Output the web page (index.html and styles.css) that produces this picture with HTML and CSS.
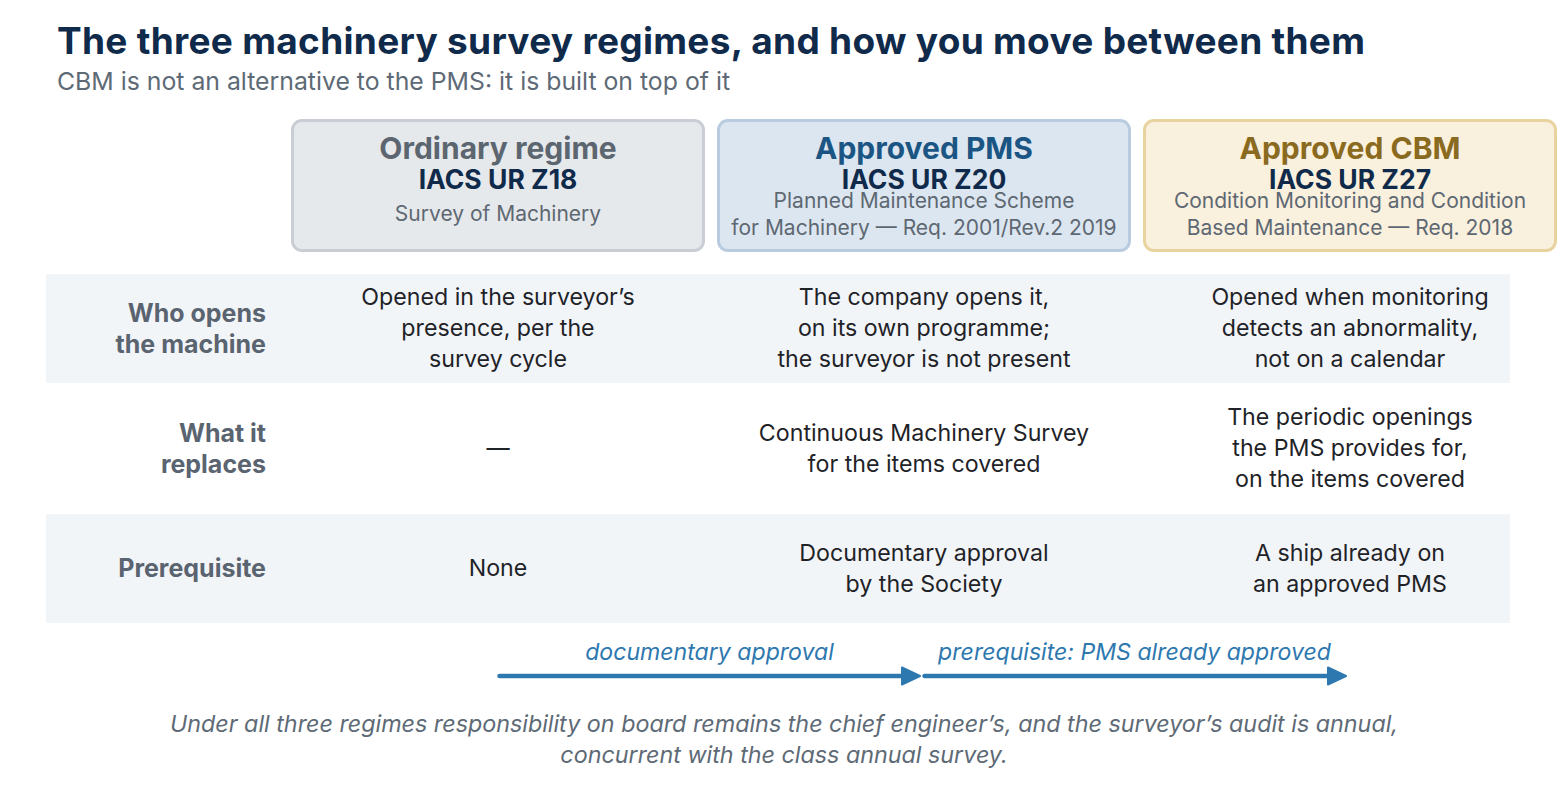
FILE: index.html
```html
<!DOCTYPE html>
<html lang="en">
<head>
<meta charset="UTF-8">
<meta name="viewport" content="width=device-width, initial-scale=1.0">
<title>Machinery survey regimes</title>
<link rel="stylesheet" href="styles.css">
</head>
<body>
<main class="page">
    <header class="header">
        <h1>The three machinery survey regimes, and how you move between them</h1>
        <p class="subtitle">CBM is not an alternative to the PMS: it is built on top of it</p>
    </header>

    <div class="regimes">
        <div class="regime ordinary">
            <div class="regime-name">Ordinary regime</div>
            <div class="regime-code">IACS UR Z18</div>
            <div class="regime-desc"><span>Survey of Machinery</span></div>
        </div>
        <div class="regime pms">
            <div class="regime-name">Approved PMS</div>
            <div class="regime-code">IACS UR Z20</div>
            <div class="regime-desc"><span>Planned Maintenance Scheme<br>for Machinery — Req. 2001/Rev.2 2019</span></div>
        </div>
        <div class="regime cbm">
            <div class="regime-name">Approved CBM</div>
            <div class="regime-code">IACS UR Z27</div>
            <div class="regime-desc"><span>Condition Monitoring and Condition<br>Based Maintenance — Req. 2018</span></div>
        </div>
    </div>

    <div class="table">
        <div class="row shaded short">
            <div class="label">Who opens<br>the machine</div>
            <div class="cell">Opened in the surveyor’s<br>presence, per the<br>survey cycle</div>
            <div class="cell">The company opens it,<br>on its own programme;<br>the surveyor is not present</div>
            <div class="cell">Opened when monitoring<br>detects an abnormality,<br>not on a calendar</div>
        </div>
        <div class="row tall">
            <div class="label">What it<br>replaces</div>
            <div class="cell">—</div>
            <div class="cell">Continuous Machinery Survey<br>for the items covered</div>
            <div class="cell">The periodic openings<br>the PMS provides for,<br>on the items covered</div>
        </div>
        <div class="row shaded short">
            <div class="label">Prerequisite</div>
            <div class="cell">None</div>
            <div class="cell">Documentary approval<br>by the Society</div>
            <div class="cell">A ship already on<br>an approved PMS</div>
        </div>
    </div>

    <div class="path">
        <div class="step">
            <div class="step-label">documentary approval</div>
            <svg class="arrow" width="425" height="20" viewBox="0 0 425 20">
                <line x1="2.5" y1="10" x2="408" y2="10" stroke="#2e78b0" stroke-width="4.5" stroke-linecap="round"/>
                <polygon points="405,1.5 423,10 405,18.5" fill="#2e78b0" stroke="#2e78b0" stroke-width="2" stroke-linejoin="round"/>
            </svg>
        </div>
        <div class="step">
            <div class="step-label">prerequisite: PMS already approved</div>
            <svg class="arrow" width="425" height="20" viewBox="0 0 425 20">
                <line x1="2.5" y1="10" x2="408" y2="10" stroke="#2e78b0" stroke-width="4.5" stroke-linecap="round"/>
                <polygon points="406,1.5 424,10 406,18.5" fill="#2e78b0" stroke="#2e78b0" stroke-width="2" stroke-linejoin="round"/>
            </svg>
        </div>
    </div>

    <p class="footnote">Under all three regimes responsibility on board remains the chief engineer’s, and the surveyor’s audit is annual,<br>concurrent with the class annual survey.</p>
</main>
</body>
</html>
```

FILE: styles.css
```css
* { margin: 0; padding: 0; box-sizing: border-box; }
body {
    background: #fff;
    font-family: 'Inter', 'Noto Sans', sans-serif;
    color: #1f2328;
    width: 1568px;
    height: 800px;
    overflow: hidden;
}
.page {
    padding: 20px 0 0 46px;
}
.header {
    padding-left: 11px;
}
h1 {
    font-size: 37px;
    line-height: 42px;
    letter-spacing: 0.3px;
    font-weight: 700;
    color: #0f2a4a;
}
.subtitle {
    margin-top: 5px;
    font-size: 24.8px;
    line-height: 28px;
    color: #5e6a76;
}
.regimes {
    margin: 24px 0 0 245px;
    display: grid;
    grid-template-columns: repeat(3, 414px);
    column-gap: 12px;
}
.regime {
    height: 133px;
    border: 3px solid;
    border-radius: 11px;
    padding-top: 10px;
    text-align: center;
    display: flex;
    flex-direction: column;
}
.regime-name {
    font-size: 30px;
    line-height: 32px;
    font-weight: 700;
}
.regime-code {
    font-size: 26.5px;
    line-height: 31px;
    font-weight: 700;
    color: #0f2a4a;
}
.regime-desc {
    margin-top: 5px;
    height: 27px;
    display: flex;
    align-items: center;
    justify-content: center;
    font-size: 21px;
    line-height: 27px;
    color: #5e6872;
}
.ordinary { background: #e6e9ec; border-color: #c9ced4; }
.ordinary .regime-name { color: #5c6670; }
.pms { background: #dce6f0; border-color: #b9cbdf; }
.pms .regime-name { color: #1b5583; }
.cbm { background: #faf0de; border-color: #e8d39f; }
.cbm .regime-name { color: #8a6a1f; }

.table {
    margin-top: 22px;
    width: 1464px;
}
.row {
    display: grid;
    grid-template-columns: 233px repeat(3, 414px);
    column-gap: 12px;
    align-items: center;
    font-size: 23.2px;
    line-height: 31px;
}
.row.short { height: 109px; }
.row.tall { height: 131px; }
.row.shaded { background: #f2f5f8; }
.label {
    text-align: right;
    padding-right: 13px;
    font-size: 25px;
    font-weight: 700;
    color: #5a6470;
}
.cell {
    text-align: center;
}

.path {
    margin: 15px 0 0 451px;
    display: flex;
}
.step {
    width: 425px;
    display: flex;
    flex-direction: column;
}
.step-label {
    text-align: center;
    font-size: 23.1px;
    line-height: 28px;
    font-style: italic;
    color: #2e78b0;
}
.arrow {
    display: block;
}
.footnote {
    margin: 22px 0 0 -46px;
    text-align: center;
    font-size: 23.3px;
    line-height: 31px;
    font-style: italic;
    color: #5e6a76;
}
```
